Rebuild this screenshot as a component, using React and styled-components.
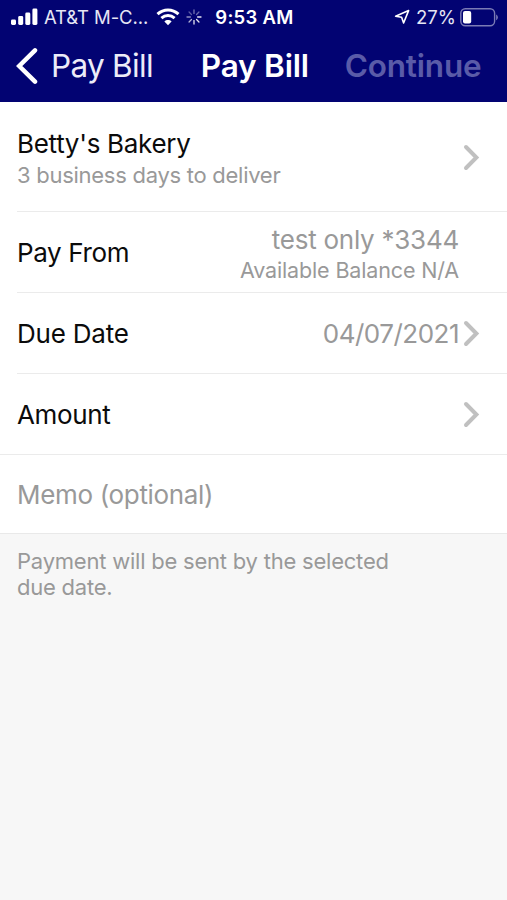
import React from 'react';
import styled, { createGlobalStyle } from 'styled-components';

const GlobalStyle = createGlobalStyle`
  * { box-sizing: border-box; }
  body { margin: 0; background: #f7f7f7; }
`;

const Screen = styled.div`
  width: 507px;
  min-height: 900px;
  background: #f7f7f7;
  font-family: Inter, 'Liberation Sans', sans-serif;
  color: #0b0b0b;
`;

const Header = styled.header`
  height: 102px;
  background: #020372;
  color: #fff;
`;

const StatusBar = styled.div`
  display: grid;
  grid-template-columns: 1fr auto 1fr;
  align-items: center;
  height: 34px;
  padding: 0 9px 0 11px;
`;

const StatusGroup = styled.div`
  display: flex;
  align-items: center;
  justify-content: ${(p) => (p.$end ? 'flex-end' : 'flex-start')};
`;

const NavBar = styled.nav`
  display: flex;
  align-items: center;
  height: 63px;
  padding-left: 15px;
`;

const Text = styled.span`
  display: block;
  white-space: pre;
  font-size: ${(p) => p.$size}px;
  line-height: ${(p) => p.$line || 32}px;
  font-weight: ${(p) => p.$weight || 400};
  letter-spacing: ${(p) => p.$track || 0}px;
  color: ${(p) => p.$color || 'inherit'};
  margin-left: ${(p) => p.$left || 0}px;
`;

const List = styled.main`
  background: #fff;
  border-bottom: 1px solid #e9e9e9;
`;

const Row = styled.section`
  display: flex;
  align-items: center;
  justify-content: space-between;
  height: ${(p) => p.$height}px;
  margin-left: ${(p) => (p.$full ? 0 : 17)}px;
  padding-top: ${(p) => p.$top || 0}px;
  padding-left: ${(p) => (p.$full ? 17 : 0)}px;
  padding-right: ${(p) => (p.$plain ? 48 : 27)}px;
  border-bottom: ${(p) => (p.$last ? 0 : 1)}px solid #ebebeb;
`;

const Stack = styled.div`
  display: flex;
  flex-direction: column;
  align-items: ${(p) => (p.$end ? 'flex-end' : 'flex-start')};
  padding-top: ${(p) => p.$top || 0}px;
`;

const Value = styled.div`
  display: flex;
  align-items: center;
  gap: 4px;
`;

const Note = styled.footer`
  padding: 14px 17px;
`;

const Icon = styled.svg`
  display: block;
  flex: none;
  margin-left: ${(p) => p.$left || 0}px;
`;

const GREY = '#999999';

const Signal = () => (
  <Icon width="27" height="18" viewBox="0 0 27 18" fill="#fff">
    <rect x="0" y="11.5" width="5" height="5.5" rx="1.4" />
    <rect x="7.2" y="8" width="5" height="9" rx="1.4" />
    <rect x="14.3" y="4.5" width="5" height="12.5" rx="1.4" />
    <rect x="21.4" y="0.5" width="5" height="16.5" rx="1.4" />
  </Icon>
);

const Wifi = () => (
  <Icon $left={8} width="24" height="18" viewBox="0 0 24 18" fill="none" stroke="#fff" strokeWidth="3">
    <path d="M1.5 6.2C7.5 .6 16.5 .6 22.5 6.2" />
    <path d="M5.4 10.1C9.3 6.6 14.7 6.6 18.6 10.1" />
    <path d="M12 17.2L8.4 13.4C10.4 11.5 13.6 11.5 15.6 13.4Z" fill="#fff" stroke="none" />
  </Icon>
);

const SPOKES = [0.45, 0.4, 0.9, 0.9, 0.9, 0.7, 0.55, 0.35];

const Spinner = () => (
  <Icon $left={6} width="16" height="16" viewBox="-8 -8 16 16" stroke="#fff" strokeWidth="1.3" strokeLinecap="round">
    {SPOKES.map((opacity, i) => (
      <path key={i} d="M0 -3.6V-7" opacity={opacity} transform={`rotate(${i * 45})`} />
    ))}
  </Icon>
);

const LocationArrow = () => (
  <Icon width="16" height="16" viewBox="0 0 16 16" fill="none" stroke="#fff" strokeWidth="1.6" strokeLinejoin="round">
    <path d="M14.6 1.6L1.6 7.2L7.6 8.3L9.6 14Z" />
  </Icon>
);

const Battery = () => (
  <Icon $left={4} width="38" height="19" viewBox="0 0 38 19">
    <rect x="0.8" y="0.8" width="33.8" height="17" rx="4.5" fill="none" stroke="#fff" strokeOpacity=".48" strokeWidth="1.4" />
    <rect x="3" y="3" width="8.2" height="12.6" rx="2" fill="#fff" />
    <path d="M36.2 6.4C38.3 7.3 38.3 11.3 36.2 12.2Z" fill="#fff" opacity=".5" />
  </Icon>
);

const BackChevron = () => (
  <Icon width="23" height="38" viewBox="0 0 23 38" fill="none" stroke="#fff" strokeWidth="4.5" strokeLinecap="round" strokeLinejoin="miter">
    <path d="M20 3.3L4.2 19L20 34.7" />
  </Icon>
);

const Disclosure = () => (
  <Icon width="17" height="27" viewBox="0 0 17 27" fill="none" stroke="#c0c0c0" strokeWidth="4" strokeLinecap="round">
    <path d="M3 3L13.4 13.5L3 24" />
  </Icon>
);

export default function App() {
  return (
    <Screen>
      <GlobalStyle />
      <Header>
        <StatusBar>
          <StatusGroup>
            <Signal />
            <Text $size={18.5} $left={6} $track={-0.1} $color="#e6e6f4">AT&amp;T M-C...</Text>
            <Wifi />
            <Spinner />
          </StatusGroup>
          <Text $size={18.5} $weight={600} $track={0.3}>9:53 AM</Text>
          <StatusGroup $end>
            <LocationArrow />
            <Text $size={18.5} $left={6} $color="#e6e6f4">27%</Text>
            <Battery />
          </StatusGroup>
        </StatusBar>
        <NavBar>
          <BackChevron />
          <Text $size={31.5} $left={13} $track={-0.7} $color="#ececf8">Pay Bill</Text>
          <Text $size={31.5} $left={48} $weight={600} $track={-0.2}>Pay Bill</Text>
          <Text $size={31.5} $left={36} $weight={600} $track={-0.2} $color="#5a5ba8">Continue</Text>
        </NavBar>
      </Header>
      <List>
        <Row $height={110} $top={2}>
          <Stack $top={3}>
            <Text $size={26} $track={-0.3}>Betty's Bakery</Text>
            <Text $size={22} $line={31} $track={-0.27} $color={GREY}>3 business days to deliver</Text>
          </Stack>
          <Disclosure />
        </Row>
        <Row $height={81} $top={2} $plain>
          <Text $size={26} $track={-0.35}>Pay From</Text>
          <Stack $end $top={1}>
            <Text $size={26} $track={-0.25} $color={GREY}>test only *3344</Text>
            <Text $size={21.5} $line={28} $track={-0.15} $color={GREY}>Available Balance N/A</Text>
          </Stack>
        </Row>
        <Row $height={81} $top={1}>
          <Text $size={26} $track={-0.2}>Due Date</Text>
          <Value>
            <Text $size={26} $track={-0.5} $color={GREY}>04/07/2021</Text>
            <Disclosure />
          </Value>
        </Row>
        <Row $height={81} $top={1} $full>
          <Text $size={26} $track={-0.35}>Amount</Text>
          <Disclosure />
        </Row>
        <Row $height={78} $top={1} $full $last>
          <Text $size={26} $track={-0.33} $color={GREY}>Memo (optional)</Text>
        </Row>
      </List>
      <Note>
        <Text $size={22} $line={26} $track={-0.22} $color={GREY}>{'Payment will be sent by the selected\ndue date.'}</Text>
      </Note>
    </Screen>
  );
}
